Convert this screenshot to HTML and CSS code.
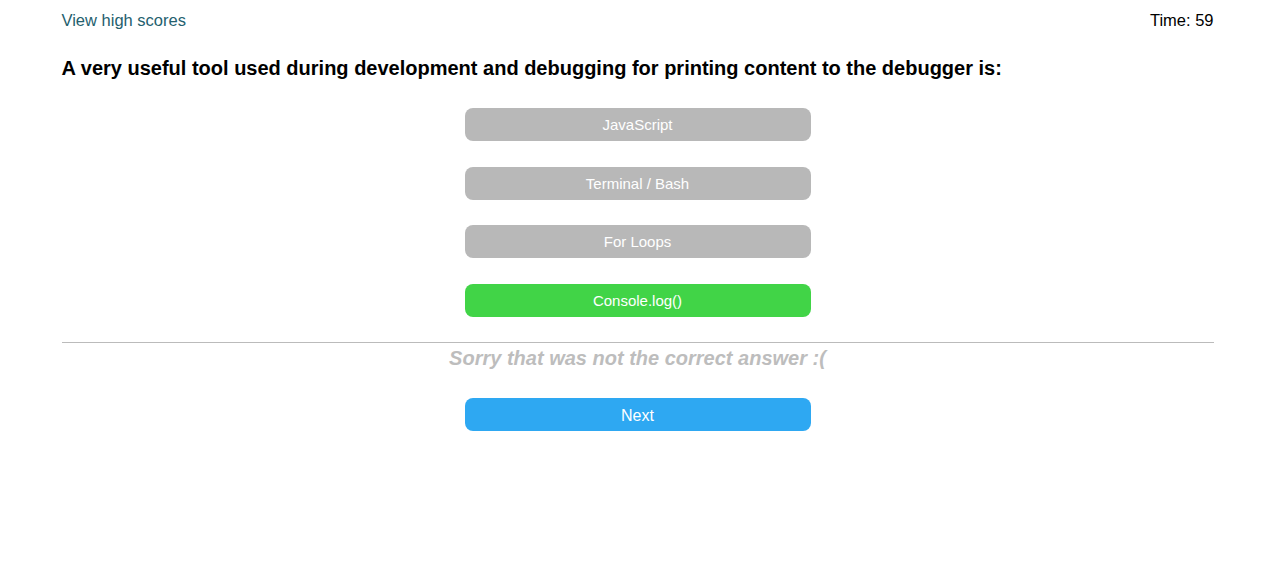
FILE: index.html
```html
<!DOCTYPE html>
<html>
<head>
<meta charset="utf-8">
<link rel="stylesheet" href="styles.css">
</head>
<body>
<div class="page">
  <header class="top">
    <a class="scores" href="#">View high scores</a>
    <span class="timer">Time: 59</span>
  </header>
  <main class="quiz">
    <h2 class="question">A very useful tool used during development and debugging for printing content to the debugger is:</h2>
    <div class="answers">
      <button class="btn gray">JavaScript</button>
      <button class="btn gray">Terminal / Bash</button>
      <button class="btn gray">For Loops</button>
      <button class="btn green">Console.log()</button>
    </div>
    <div class="result">
      <p class="message">Sorry that was not the correct answer :(</p>
      <button class="btn blue">Next</button>
    </div>
  </main>
</div>
</body>
</html>
```
FILE: styles.css
```css
* { box-sizing: border-box; }
html, body { margin: 0; padding: 0; background: #fff; }
body { font-family: "Liberation Sans", Arial, sans-serif; color: #000; }
.page { width: 1152px; margin: 0 auto; }
.top { display: flex; justify-content: space-between; padding-top: 11px; font-size: 16.5px; line-height: 18px; }
.scores { color: #24606e; text-decoration: none; }
.timer { color: #000; }
.question { font-size: 20px; font-weight: bold; margin: 28px 0 0; line-height: 23px; }
.answers { display: flex; flex-direction: column; align-items: center; gap: 25.5px; margin-top: 28px; }
.btn { width: 346px; height: 33px; border: none; border-radius: 8px; color: #fff; font-family: "Liberation Sans", Arial, sans-serif; font-size: 15px; padding: 0; display: block; }
.gray { background: #b8b8b8; }
.green { background: #41d447; }
.blue { background: #2ea8f2; font-size: 16px; padding-top: 3px; }
.result { border-top: 1px solid #bbb; margin-top: 25px; display: flex; flex-direction: column; align-items: center; }
.message { margin: 4px 0 0; font-size: 20px; font-style: italic; font-weight: bold; color: #bdbdbd; line-height: 23px; }
.result .btn { margin-top: 28px; }
```
